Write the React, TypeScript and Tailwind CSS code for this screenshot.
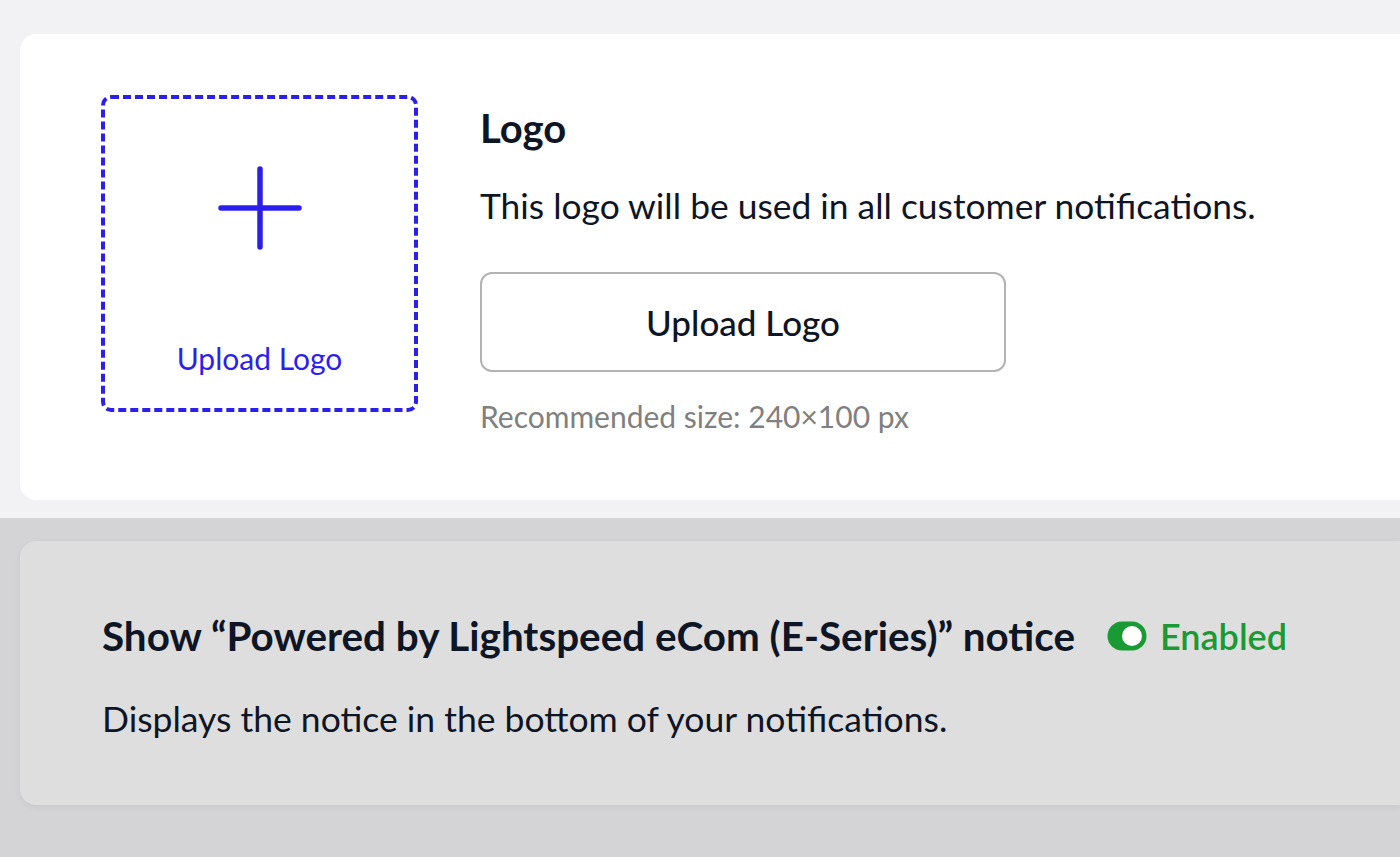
import React from "react";

function ToggleIcon() {
  return (
    <svg width="40" height="30" viewBox="0 0 40 30" className="shrink-0">
      <rect x="0.5" y="0.5" width="39" height="29" rx="14.5" fill="#1a9a34" />
      <circle cx="25" cy="15" r="10" fill="#ffffff" />
    </svg>
  );
}

export default function App() {
  return (
    <div className="w-[1400px] h-[857px] overflow-hidden flex flex-col" style={{ fontFamily: "Lato, 'Noto Sans', sans-serif" }}>
      <div className="bg-[#f2f2f4] h-[518px] pt-[34px] pl-[20px] shrink-0">
        <div className="bg-white h-[466px] rounded-l-[16px] pl-[81px] pt-[61px] flex gap-[62px]">
          <div className="w-[317px] h-[317px] border-[4px] border-dashed border-[#2b1ff0] rounded-[10px] flex flex-col items-center shrink-0">
            <svg width="84" height="84" viewBox="0 0 84 84" className="mt-[67px] shrink-0">
              <line x1="42" y1="3" x2="42" y2="81" stroke="#2b1ff0" strokeWidth="5.5" strokeLinecap="round" />
              <line x1="3" y1="42" x2="81" y2="42" stroke="#2b1ff0" strokeWidth="5.5" strokeLinecap="round" />
            </svg>
            <div className="mt-[93px] text-[30px] text-[#2b1ff0] leading-none whitespace-nowrap">Upload Logo</div>
          </div>
          <div className="flex flex-col pt-[13px]">
            <div className="text-[40px] font-bold text-[#0e1525] leading-none">Logo</div>
            <div className="mt-[40px] text-[35.4px] text-[#0e1525] leading-none whitespace-nowrap">This logo will be used in all customer notifications.</div>
            <button className="mt-[49px] w-[526px] h-[100px] border-2 border-[#b3b3b3] rounded-[12px] bg-white text-[35px] font-medium text-[#0e1525] leading-none">Upload Logo</button>
            <div className="mt-[29px] text-[30px] text-[#808080] leading-none whitespace-nowrap">Recommended size: 240×100 px</div>
          </div>
        </div>
      </div>
      <div className="bg-[#d4d3d6] flex-1 pt-[23px] pl-[20px]">
        <div className="bg-[#dedede] h-[264px] rounded-l-[16px] pl-[82px] pt-[75px] shadow-[0_2px_6px_rgba(0,0,0,0.06)]">
          <div className="flex items-center">
            <div className="text-[40.4px] font-bold text-[#0e1525] leading-none whitespace-nowrap">Show “Powered by Lightspeed eCom (E-Series)” notice</div>
            <div className="ml-[32px] flex items-center gap-[13px]">
              <ToggleIcon />
              <span className="text-[36px] font-semibold text-[#1a9a34] leading-none">Enabled</span>
            </div>
          </div>
          <div className="mt-[45px] text-[35.5px] text-[#0e1525] leading-none whitespace-nowrap">Displays the notice in the bottom of your notifications.</div>
        </div>
      </div>
    </div>
  );
}
